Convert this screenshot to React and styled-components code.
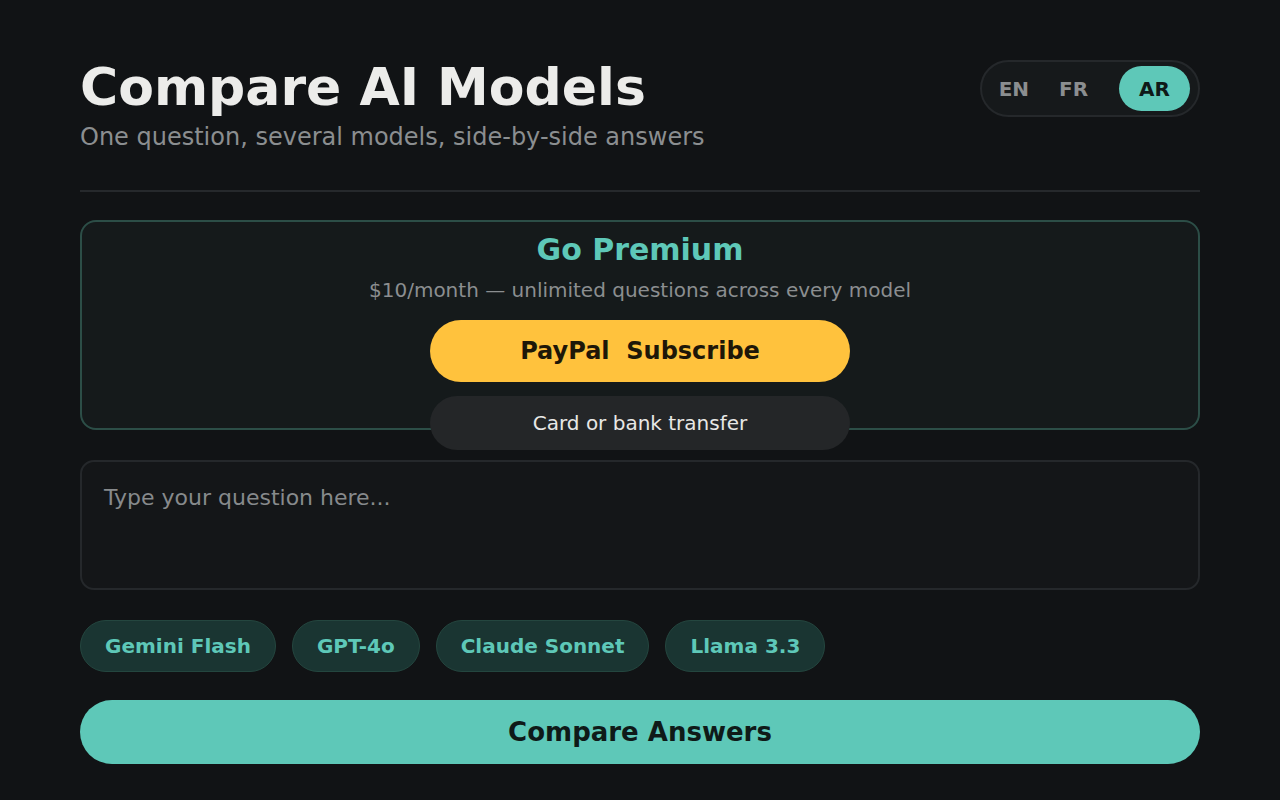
import React, { useState } from "react";
import styled, { createGlobalStyle } from "styled-components";

const GlobalStyle = createGlobalStyle`
  html, body {
    margin: 0;
    background: #111315;
    font-family: "DejaVu Sans", "Noto Sans", sans-serif;
    color: #ececea;
  }
  * { box-sizing: border-box; }
`;

const Page = styled.main`
  width: 1120px;
  margin: 0 auto;
  padding-top: 56px;
`;

const Header = styled.header`
  display: flex;
  justify-content: space-between;
  align-items: flex-start;
  padding-bottom: 38px;
  border-bottom: 2px solid #26292c;
`;

const Title = styled.h1`
  margin: 0;
  font-size: 52px;
  line-height: 62px;
  font-weight: 700;
  color: #ececea;
`;

const Subtitle = styled.p`
  margin: 4px 0 0;
  font-size: 24px;
  line-height: 30px;
  color: #8b8e90;
`;

const LangToggle = styled.div`
  display: flex;
  align-items: center;
  height: 57px;
  padding: 4px 8px 4px 2px;
  margin-top: 4px;
  border: 2px solid #25282b;
  border-radius: 29px;
  background: #16191b;
`;

const LangButton = styled.button`
  border: none;
  height: 45px;
  padding: 0 ${(p) => (p.$active ? "20px" : "15px")};
  margin-left: ${(p) => (p.$active ? "16px" : "0")};
  border-radius: 23px;
  font-family: inherit;
  font-size: 20px;
  font-weight: 700;
  color: ${(p) => (p.$active ? "#0f1a18" : "#8b8e90")};
  background: ${(p) => (p.$active ? "#5ec8b8" : "transparent")};
  cursor: pointer;
`;

const PremiumCard = styled.section`
  margin-top: 28px;
  height: 210px;
  border: 2px solid #2c4e47;
  border-radius: 16px;
  background: #151a1b;
  display: flex;
  flex-direction: column;
  align-items: center;
  padding-top: 11px;
`;

const PremiumTitle = styled.h2`
  margin: 0;
  font-size: 30px;
  line-height: 34px;
  font-weight: 700;
  color: #5ec8b8;
`;

const PremiumText = styled.p`
  margin: 10px 0 0;
  font-size: 20px;
  line-height: 26px;
  color: #8b8e90;
`;

const PillButton = styled.button`
  flex-shrink: 0;
  width: 420px;
  border: none;
  border-radius: 32px;
  font-family: inherit;
  cursor: pointer;
  position: relative;
  z-index: 1;
`;

const PayPalButton = styled(PillButton)`
  margin-top: 17px;
  height: 62px;
  background: #ffc23d;
  color: #1e1708;
  font-size: 24px;
  font-weight: 700;
  white-space: pre;
`;

const AltButton = styled(PillButton)`
  margin-top: 14px;
  height: 54px;
  background: #242628;
  color: #e8e8e6;
  font-size: 20px;
`;

const Question = styled.textarea`
  display: block;
  width: 100%;
  height: 130px;
  margin-top: 30px;
  padding: 21px 22px;
  border: 2px solid #25282b;
  border-radius: 14px;
  background: #141618;
  color: #ececea;
  font-family: inherit;
  font-size: 22px;
  line-height: 30px;
  resize: none;
  outline: none;
  &::placeholder { color: #878a8c; }
`;

const ChipRow = styled.div`
  display: flex;
  gap: 16px;
  margin-top: 30px;
`;

const Chip = styled.button`
  height: 52px;
  padding: 0 24px;
  border: 1px solid #24463f;
  border-radius: 26px;
  background: #1a3532;
  color: #5ec8b8;
  font-family: inherit;
  font-size: 20px;
  font-weight: 700;
  cursor: pointer;
`;

const CompareButton = styled.button`
  display: block;
  width: 100%;
  height: 64px;
  margin-top: 28px;
  border: none;
  border-radius: 32px;
  background: #5ec8b8;
  color: #0f1a18;
  font-family: inherit;
  font-size: 26px;
  font-weight: 700;
  cursor: pointer;
`;

const models = ["Gemini Flash", "GPT-4o", "Claude Sonnet", "Llama 3.3"];
const langs = ["EN", "FR", "AR"];

export default function App() {
  const [lang, setLang] = useState("AR");
  return (
    <>
      <GlobalStyle />
      <Page>
        <Header>
          <div>
            <Title>Compare AI Models</Title>
            <Subtitle>One question, several models, side-by-side answers</Subtitle>
          </div>
          <LangToggle>
            {langs.map((l) => (
              <LangButton key={l} $active={l === lang} onClick={() => setLang(l)}>
                {l}
              </LangButton>
            ))}
          </LangToggle>
        </Header>

        <PremiumCard>
          <PremiumTitle>Go Premium</PremiumTitle>
          <PremiumText>$10/month — unlimited questions across every model</PremiumText>
          <PayPalButton>PayPal  Subscribe</PayPalButton>
          <AltButton>Card or bank transfer</AltButton>
        </PremiumCard>

        <Question placeholder="Type your question here..." />

        <ChipRow>
          {models.map((m) => (
            <Chip key={m}>{m}</Chip>
          ))}
        </ChipRow>

        <CompareButton>Compare Answers</CompareButton>
      </Page>
    </>
  );
}
